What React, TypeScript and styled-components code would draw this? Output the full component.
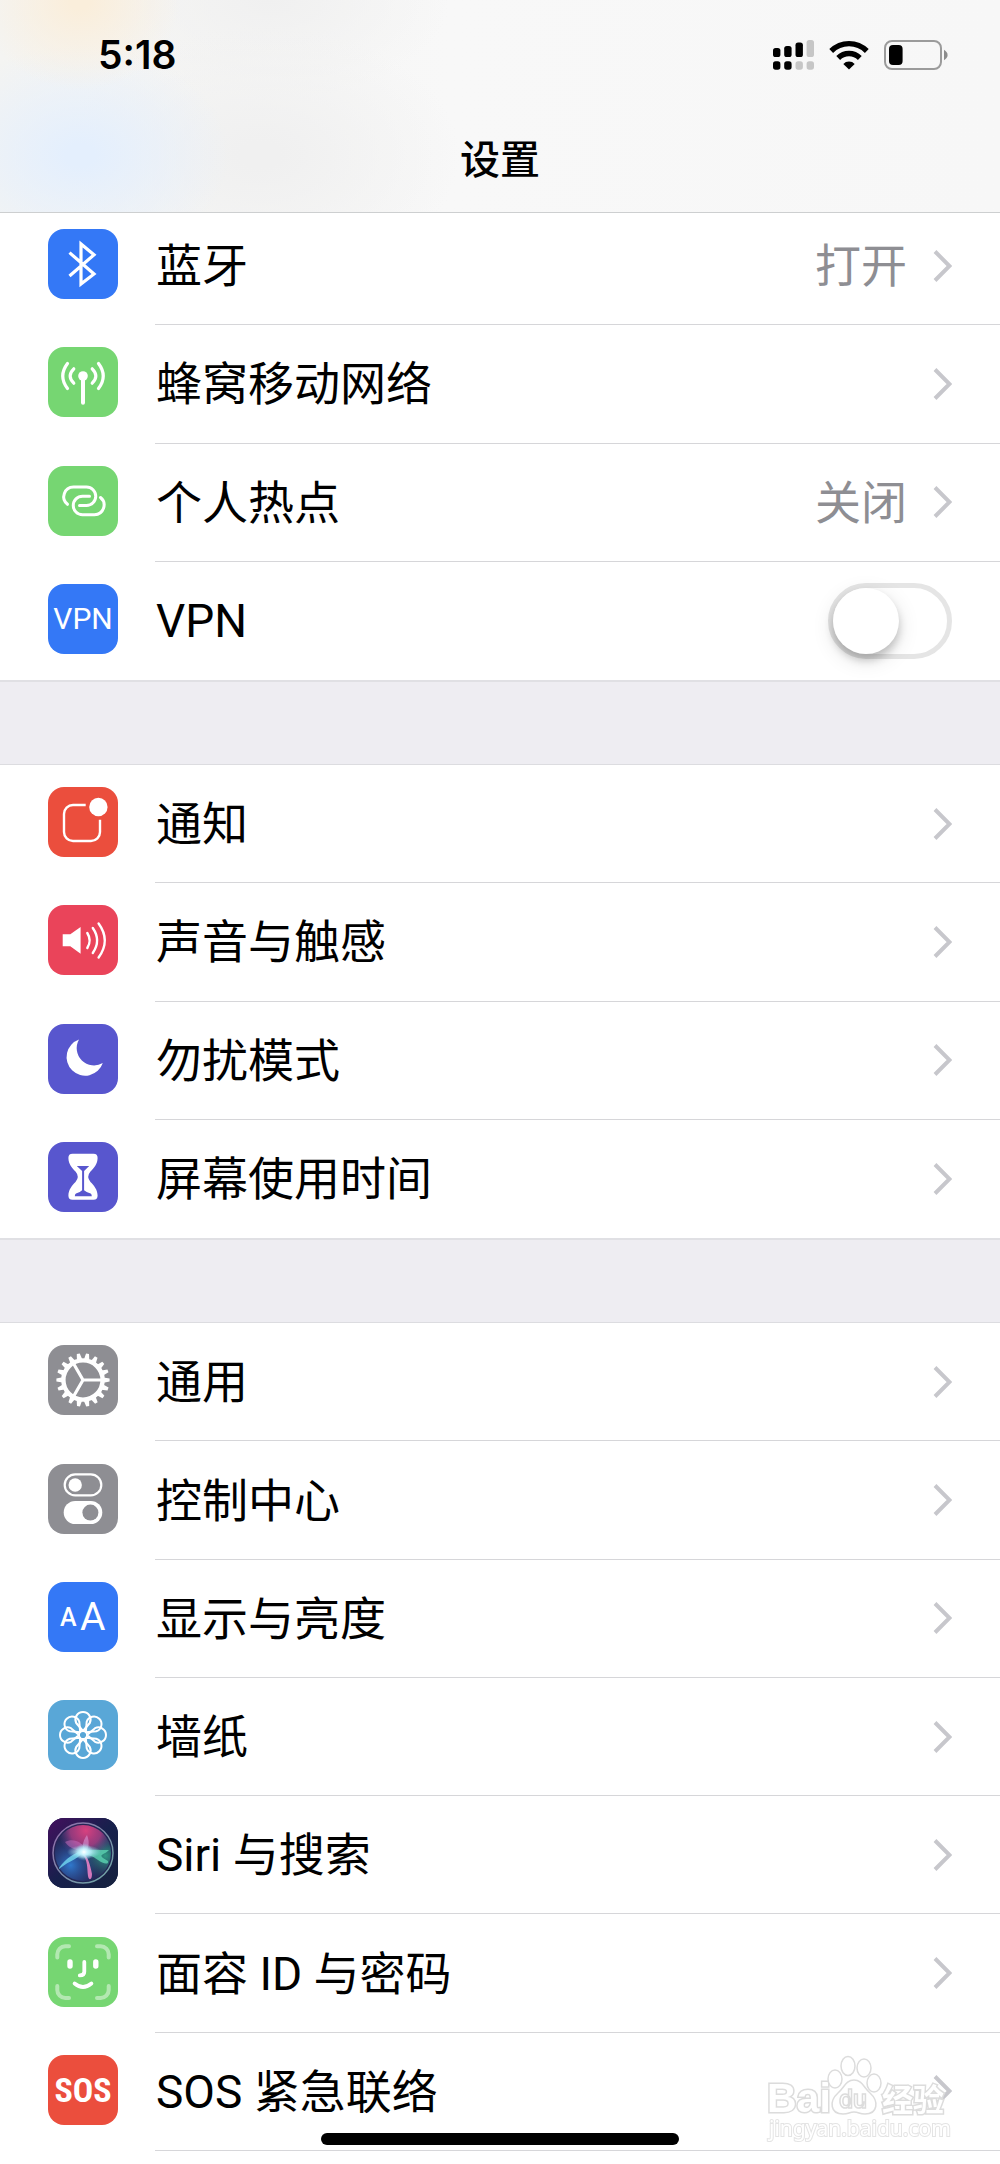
import React from 'react';
import styled, { createGlobalStyle, css } from 'styled-components';

const GlobalStyle = createGlobalStyle`
  * { box-sizing: border-box; }
  body {
    margin: 0;
    background: #fff;
    color: #000;
    font-family: Roboto, "Noto Sans CJK SC", sans-serif;
  }
`;

const Screen = styled.div`
  min-height: 100vh;
  display: flex;
  flex-direction: column;
  background: #eeedf2;
`;

const Header = styled.header`
  position: sticky;
  top: 0;
  z-index: 1;
  border-bottom: 1px solid #cdcfd0;
  background:
    radial-gradient(ellipse 100px 90px at 80px 0, #faeedb 10%, rgba(250, 240, 226, 0) 100%),
    radial-gradient(ellipse 150px 110px at 80px 155px, #e4effd 10%, rgba(232, 241, 252, 0) 100%),
    radial-gradient(ellipse 200px 130px at 260px 155px, #f0f0f0 10%, rgba(242, 242, 242, 0) 100%),
    radial-gradient(ellipse 180px 100px at 270px 0, #f0f0f0 0, rgba(242, 242, 242, 0) 100%),
    linear-gradient(90deg, #f4f4f2, #f8f8f8 45%, #f7f7f7);
`;

const StatusBar = styled.div`
  height: 110px;
  padding: 0 52px 0 98px;
  display: flex;
  align-items: center;
  justify-content: space-between;
`;

const Clock = styled.time`
  font: 600 39px/48px Inter, sans-serif;
`;

const Indicators = styled.div`
  display: flex;
  align-items: center;
  gap: 15px;
  svg { display: block; }
`;

const Title = styled.h1`
  margin: 0;
  height: 102px;
  font-size: 40px;
  line-height: 102px;
  font-weight: 500;
  text-align: center;
`;

const List = styled.main`
  flex: 1;
  display: flex;
  flex-direction: column;
  gap: 82px;
  margin-top: -6px;
`;

const Group = styled.ul<{ $rows: number }>`
  flex: ${p => p.$rows} 0 auto;
  display: flex;
  flex-direction: column;
  margin: 0;
  padding: 0;
  list-style: none;
  background: #fff;
  border-top: 1px solid #dcdce0;
  border-bottom: 2px solid #e0e0e4;
  &:first-child { border-top: 0; }
  &:last-child { border-bottom: 0; padding-bottom: 13px; }
`;

const Item = styled.li`
  flex: 1 0 118px;
  display: flex;
`;

const rowLayout = css`
  flex: 1;
  display: flex;
  align-items: center;
  gap: 37px;
  padding-left: 48px;
`;

const RowLink = styled.a`
  ${rowLayout}
  color: inherit;
  text-decoration: none;
`;

const RowLabel = styled.label`
  ${rowLayout}
`;

const Tile = styled.span<{ $color: string }>`
  flex: none;
  width: 70px;
  height: 70px;
  margin-bottom: 4px;
  border-radius: 16px;
  overflow: hidden;
  background: ${p => p.$color};
  svg { display: block; }
`;

const Body = styled.span`
  flex: 1;
  align-self: stretch;
  display: flex;
  align-items: center;
  padding-right: 48px;
  border-bottom: 1px solid #d6d6d9;
  ${Group}:not(:last-child) ${Item}:last-child & { border-bottom: 0; }
`;

const rowText = css`
  padding-top: 1px;
  font-size: 46px;
  line-height: 60px;
`;

const Name = styled.span`
  ${rowText}
  flex: 1;
  padding-left: 1px;
`;

const Value = styled.span`
  ${rowText}
  margin-right: 26px;
  color: #8e8e93;
`;

const Switch = styled.input`
  appearance: none;
  flex: none;
  display: flex;
  width: 124px;
  height: 76px;
  margin: 0;
  border: 5px solid #e5e5e5;
  border-radius: 38px;
  background: #fff;
  &::before {
    content: "";
    width: 66px;
    height: 66px;
    border-radius: 50%;
    background: #fff;
    box-shadow: 0 6px 8px rgba(0, 0, 0, 0.2), 0 6px 22px rgba(0, 0, 0, 0.12);
  }
  &:checked { background: #4cd964; border-color: #4cd964; justify-content: flex-end; }
`;

const HomeBar = styled.div`
  position: fixed;
  z-index: 3;
  bottom: 19px;
  left: 50%;
  width: 358px;
  height: 12px;
  margin-left: -179px;
  border-radius: 6px;
  background: #000;
`;

const Watermark = styled.svg`
  position: fixed;
  z-index: 2;
  right: 44px;
  bottom: 10px;
  pointer-events: none;
`;

const Chevron = () => (
  <svg width="19" height="32" viewBox="0 0 19 32" fill="none" stroke="#c7c7cc" strokeWidth="4" aria-hidden="true">
    <path d="M2 1.5 L16.5 16 L2 30.5" />
  </svg>
);

const Glyph = ({ children }: { children: React.ReactNode }) => (
  <svg width="70" height="70" viewBox="0 0 70 70" fill="none" stroke="#fff" strokeLinecap="round" aria-hidden="true">
    {children}
  </svg>
);

const BluetoothIcon = () => (
  <Glyph>
    <path strokeWidth="3.2" strokeLinecap="butt" d="M21.5 23.6 L46 45 L33 55 V15 L46 25.8 L21.5 47" />
  </Glyph>
);

const CellularIcon = () => (
  <Glyph>
    <circle cx="35" cy="29" r="4.8" fill="#fff" stroke="none" />
    <path strokeWidth="4" d="M35 30 V55.8" />
    <path strokeWidth="3.2" d="M44.2 21.8 Q51.5 29 44.2 36.2 M50.5 16.5 Q60 29 50.5 41.5 M25.8 21.8 Q18.5 29 25.8 36.2 M19.5 16.5 Q10 29 19.5 41.5" />
  </Glyph>
);

const HotspotIcon = () => (
  <Glyph>
    <path strokeWidth="3" d="M19.5 38.3 A9.7 9.7 0 0 1 25.5 21 H38.5 A9.25 9.25 0 0 1 38.5 39.5 H31.5" />
    <path strokeWidth="3" d="M52.5 31.5 A9.7 9.7 0 0 1 46.5 48.7 H34.5 A9.25 9.25 0 0 1 34.5 30.2 H41.5" />
  </Glyph>
);

const VpnIcon = () => (
  <Glyph>
    <text x="35" y="45" textAnchor="middle" fill="#fff" stroke="none" fontSize="30">VPN</text>
  </Glyph>
);

const NoticeIcon = () => (
  <Glyph>
    <path strokeWidth="2.4" strokeLinecap="butt" d="M37.7 18 H25 a9 9 0 0 0 -9 9 V45 a9 9 0 0 0 9 9 H43 a9 9 0 0 0 9 -9 V32.7" />
    <circle cx="50.4" cy="20" r="9.2" fill="#fff" stroke="none" />
  </Glyph>
);

const SoundIcon = () => (
  <Glyph>
    <path fill="#fff" stroke="none" d="M14.7 29.3 H22.3 L32.6 22 V48.7 L22.3 41.3 H14.7 Z" />
    <path strokeWidth="2.4" d="M39.3 28 Q44 35.5 39.3 43 M44.8 23 Q53.4 35.5 44.8 48 M50.6 18.5 Q63 35.5 50.6 52.5" />
  </Glyph>
);

const MoonIcon = () => (
  <Glyph>
    <path fill="#fff" stroke="none" d="M31 15.5 A18.6 18.6 0 1 0 54.8 39 A17.3 17.3 0 0 1 31 15.5 Z" />
  </Glyph>
);

const HourglassIcon = () => (
  <Glyph>
    <path fill="#fff" stroke="none" d="M24.5 11.7 H45.5 Q49.7 11.7 49.6 16 C49.5 22 46 26 42.5 29.5 Q38 34.7 42.5 39.9 C46 43.5 49.5 47.5 49.6 53.5 Q49.7 57.7 45.5 57.7 H24.5 Q20.3 57.7 20.4 53.5 C20.5 47.5 24 43.5 27.5 39.9 Q32 34.7 27.5 29.5 C24 26 20.5 22 20.4 16 Q20.3 11.7 24.5 11.7 Z" />
    <path fill="#5856ce" stroke="none" d="M28.8 24 H41.2 L36.1 29 V48.2 Q38 50.2 42.6 51.6 Q43.8 52.2 43.8 54.2 H26.8 Q26.8 52.2 28 51.6 Q32.4 50.2 34.1 48.2 V29 Z" />
  </Glyph>
);

const GearIcon = () => (
  <Glyph>
    <circle cx="35" cy="35" r="19.6" strokeWidth="4.4" />
    {Array.from({ length: 18 }, (_, i) => (
      <path key={i} fill="#fff" stroke="none" d="M32.4 14.5 L33.4 8.4 H36.4 L37.8 14.5 Z" transform={`rotate(${i * 20 + 10} 35 35)`} />
    ))}
    <path strokeWidth="3.2" d="M35 35 H54 M35 35 L25.5 18.5 M35 35 L25.5 51.5" />
  </Glyph>
);

const ControlIcon = () => (
  <Glyph>
    <rect x="16.7" y="10.4" width="36.6" height="21" rx="10.5" strokeWidth="2.2" />
    <circle cx="27.2" cy="21" r="6.7" fill="#fff" stroke="none" />
    <rect x="15.7" y="37" width="38.6" height="23" rx="11.5" fill="#fff" stroke="none" />
    <circle cx="42.4" cy="48.6" r="8" fill="#8e8e93" stroke="none" />
  </Glyph>
);

const DisplayIcon = () => (
  <Glyph>
    <g fill="#fff" stroke="none">
      <text x="12" y="44" fontSize="25" fontWeight="500">A</text>
      <text x="32" y="48" fontSize="39" fontWeight="400">A</text>
    </g>
  </Glyph>
);

const WallpaperIcon = () => (
  <Glyph>
    {Array.from({ length: 8 }, (_, i) => (
      <path
        key={i}
        strokeWidth="2"
        strokeLinejoin="round"
        d="M35 31 L28.2 23 A7.6 7.6 0 1 1 41.8 23 Z"
        transform={`rotate(${i * 45} 35 35)`}
      />
    ))}
    <circle cx="35" cy="35" r="4" strokeWidth="1.8" />
  </Glyph>
);

const SiriIcon = () => (
  <Glyph>
    <defs>
      <linearGradient id="siriBack" x1="0" y1="0" x2="1" y2="1">
        <stop offset="0" stopColor="#44105e" />
        <stop offset="0.5" stopColor="#17204c" />
        <stop offset="1" stopColor="#16223e" />
      </linearGradient>
      <radialGradient id="siriPink" cx="0.55" cy="0.1" r="0.5">
        <stop offset="0" stopColor="#d8417f" />
        <stop offset="0.55" stopColor="#a83d83" stopOpacity="0.85" />
        <stop offset="1" stopColor="#5a3f92" stopOpacity="0" />
      </radialGradient>
      <radialGradient id="siriBlue" cx="0.28" cy="0.72" r="0.5">
        <stop offset="0" stopColor="#2f78cc" />
        <stop offset="1" stopColor="#2a4b96" stopOpacity="0" />
      </radialGradient>
      <radialGradient id="siriGreen" cx="0.9" cy="0.55" r="0.42">
        <stop offset="0" stopColor="#2f9a83" />
        <stop offset="1" stopColor="#27606f" stopOpacity="0" />
      </radialGradient>
      <radialGradient id="siriGlow">
        <stop offset="0" stopColor="#fff" />
        <stop offset="0.35" stopColor="#c9f6ff" stopOpacity="0.85" />
        <stop offset="1" stopColor="#8fe3f0" stopOpacity="0" />
      </radialGradient>
      <linearGradient id="siriRim" x1="0" y1="0" x2="1" y2="1">
        <stop offset="0" stopColor="#a079b8" />
        <stop offset="1" stopColor="#7dc0b8" />
      </linearGradient>
    </defs>
    <g stroke="none">
      <rect width="70" height="70" fill="url(#siriBack)" />
      <circle cx="35" cy="35" r="29" fill="#242757" />
      <circle cx="35" cy="35" r="28" fill="url(#siriBlue)" />
      <circle cx="35" cy="35" r="28" fill="url(#siriGreen)" />
      <circle cx="35" cy="35" r="28" fill="url(#siriPink)" />
      <path fill="#c86fc0" opacity="0.5" d="M17 24 C24 20 34 22 39 34 C30 33 22 31 17 24 Z" />
      <path fill="#e0a3e4" opacity="0.5" d="M39 17 C34 24 34 30 36 36 C41 32 42 24 39 17 Z" />
      <path fill="#6fd2ec" opacity="0.85" d="M11 50 C18 40 26 35 36 32 C33 40 22 42 11 51 Z" />
      <path fill="#5fd9b6" opacity="0.75" d="M34 33 C44 31 52 32 61 32 C55 38 48 36 60 43 C61 47 55 46 50 42 C45 38 40 37 34 36 Z" />
      <path fill="#e77fc4" opacity="0.9" d="M34 34 C40 38 42 46 44 56 C44 62 41 63 40 58 C39 50 40 42 34 36 Z" />
      <ellipse cx="36" cy="34" rx="17" ry="7" fill="url(#siriGlow)" />
      <circle cx="36" cy="34" r="9" fill="url(#siriGlow)" />
    </g>
    <circle cx="35" cy="35" r="30" stroke="url(#siriRim)" strokeWidth="1.5" opacity="0.85" />
  </Glyph>
);

const FaceIcon = () => (
  <Glyph>
    <path opacity="0.45" strokeWidth="4" d="M9.3 20.5 V17.3 a8 8 0 0 1 8 -8 H21 M49 9.3 h3.7 a8 8 0 0 1 8 8 V20.5 M60.7 49 v4 a8 8 0 0 1 -8 8 H49 M21 61 H17.3 a8 8 0 0 1 -8 -8 V49" />
    <path strokeWidth="5.4" d="M22 25 V29 M47.8 25 V29" />
    <path strokeWidth="3.8" d="M36.3 25 V34.8 Q36.3 38.4 31.8 38.4 M26.6 46.5 Q35 53.5 43.4 46.5" />
  </Glyph>
);

const SosIcon = () => (
  <Glyph>
    <text x="35" y="47" textAnchor="middle" fill="#fff" stroke="none" fontSize="34" fontWeight="700" fontFamily="Roboto Condensed, Roboto, sans-serif">SOS</text>
  </Glyph>
);

type Row = {
  name: string;
  color: string;
  Icon: () => React.JSX.Element;
  value?: string;
  toggle?: boolean;
};

const groups: Row[][] = [
  [
    { name: '蓝牙', color: '#3478f6', Icon: BluetoothIcon, value: '打开' },
    { name: '蜂窝移动网络', color: '#76d672', Icon: CellularIcon },
    { name: '个人热点', color: '#76d672', Icon: HotspotIcon, value: '关闭' },
    { name: 'VPN', color: '#3478f6', Icon: VpnIcon, toggle: true },
  ],
  [
    { name: '通知', color: '#eb4e3d', Icon: NoticeIcon },
    { name: '声音与触感', color: '#ea445a', Icon: SoundIcon },
    { name: '勿扰模式', color: '#5856ce', Icon: MoonIcon },
    { name: '屏幕使用时间', color: '#5856ce', Icon: HourglassIcon },
  ],
  [
    { name: '通用', color: '#8e8e93', Icon: GearIcon },
    { name: '控制中心', color: '#8e8e93', Icon: ControlIcon },
    { name: '显示与亮度', color: '#3478f6', Icon: DisplayIcon },
    { name: '墙纸', color: '#59a7d7', Icon: WallpaperIcon },
    { name: 'Siri 与搜索', color: '#17204c', Icon: SiriIcon },
    { name: '面容 ID 与密码', color: '#76d672', Icon: FaceIcon },
    { name: 'SOS 紧急联络', color: '#eb4e3d', Icon: SosIcon },
  ],
];

const SettingRow = ({ name, color, Icon, value, toggle }: Row) => {
  const tile = <Tile $color={color}><Icon /></Tile>;
  return (
    <Item>
      {toggle ? (
        <RowLabel>
          {tile}
          <Body>
            <Name>{name}</Name>
            <Switch type="checkbox" />
          </Body>
        </RowLabel>
      ) : (
        <RowLink href="#">
          {tile}
          <Body>
            <Name>{name}</Name>
            {value && <Value>{value}</Value>}
            <Chevron />
          </Body>
        </RowLink>
      )}
    </Item>
  );
};

const SignalIcon = () => (
  <svg width="41" height="30" viewBox="0 0 41 30" aria-hidden="true">
    <rect x="0" y="8" width="7.4" height="9" rx="2.6" />
    <rect x="11.2" y="6" width="7.4" height="11" rx="2.6" />
    <rect x="22.5" y="2.6" width="7.4" height="14.4" rx="2.6" />
    <rect x="33.6" y="0" width="7.4" height="17" rx="2.6" fill="#c6c6c6" />
    <rect x="0" y="21.3" width="7.4" height="8.4" rx="2.6" />
    <rect x="11.2" y="21.3" width="7.4" height="8.4" rx="2.6" />
    <rect x="22.5" y="21.3" width="7.4" height="8.4" rx="2.6" fill="#c6c6c6" />
    <rect x="33.6" y="21.3" width="7.4" height="8.4" rx="2.6" fill="#c6c6c6" />
  </svg>
);

const WifiIcon = () => (
  <svg width="40" height="30" viewBox="0 0 40 30" fill="none" stroke="#000" aria-hidden="true">
    <path strokeWidth="5.4" d="M2.2 11 A25.2 25.2 0 0 1 37.8 11" />
    <path strokeWidth="5.4" d="M9.2 18 A15.3 15.3 0 0 1 30.8 18" />
    <path fill="#000" stroke="none" d="M20 29.6 L14.3 24 A8 8 0 0 1 25.7 24 Z" />
  </svg>
);

const BatteryIcon = () => (
  <svg width="64" height="30" viewBox="0 0 64 30" aria-hidden="true">
    <rect x="1" y="1" width="56" height="28" rx="7" fill="none" stroke="#9b9b9b" strokeWidth="2" />
    <rect x="5" y="5" width="13.6" height="20" rx="4" />
    <path fill="#8c8c8c" d="M60 9.8 Q63.6 12 63.6 15 Q63.6 18 60 20.2 Z" />
  </svg>
);

export default function App() {
  return (
    <Screen>
      <GlobalStyle />
      <Header>
        <StatusBar>
          <Clock>5:18</Clock>
          <Indicators>
            <SignalIcon />
            <WifiIcon />
            <BatteryIcon />
          </Indicators>
        </StatusBar>
        <Title>设置</Title>
      </Header>
      <List>
        {groups.map(rows => (
          <Group key={rows[0].name} $rows={rows.length}>
            {rows.map(row => <SettingRow key={row.name} {...row} />)}
          </Group>
        ))}
      </List>
      <Watermark width="190" height="100" viewBox="0 0 190 100" fill="#fff" stroke="#dcdcdc" strokeWidth="1.5">
        <g paintOrder="stroke" strokeWidth="3">
          <text x="1" y="58" fontSize="41" fontWeight="700" fontFamily="Liberation Sans, sans-serif">Bai</text>
          <text x="116" y="57" fontSize="31" fontWeight="700">经验</text>
        </g>
        <ellipse cx="69" cy="25" rx="7" ry="9" />
        <ellipse cx="82" cy="12" rx="7" ry="9.5" />
        <ellipse cx="98" cy="14" rx="7" ry="9" />
        <ellipse cx="108" cy="29" rx="7" ry="9" />
        <path d="M88 26 C96 26 98 34 104 39 C113 47 112 60 99 60 C93 60 93 58 88 58 C83 58 83 60 77 60 C64 60 63 47 72 39 C78 34 80 26 88 26 Z" />
        <text x="73" y="54" fontSize="25" fontWeight="500" stroke="#dcdcdc">du</text>
        <text x="3" y="82" fontSize="21" stroke="#e4e4e4" strokeWidth="2" paintOrder="stroke" fontFamily="Noto Sans, sans-serif">jingyan.baidu.com</text>
      </Watermark>
      <HomeBar />
    </Screen>
  );
}
